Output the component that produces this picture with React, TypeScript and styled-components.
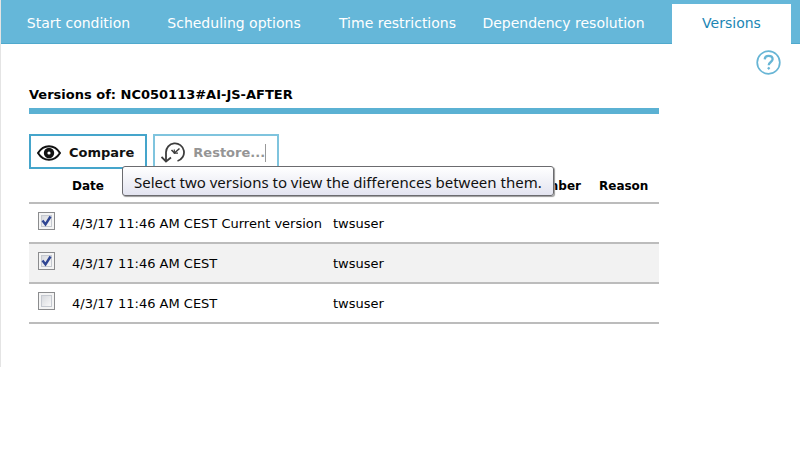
import React, { useState } from "react";
import styled, { createGlobalStyle } from "styled-components";

const GlobalStyle = createGlobalStyle`
  * { box-sizing: border-box; }
  body {
    margin: 0;
    background: #fff;
    color: #000;
    font-family: Verdana, "DejaVu Sans", sans-serif;
    font-size: 13px;
  }
`;

const Panel = styled.div`
  border-left: 1px solid #e4e4e4;
  padding-bottom: 43px;
`;

const TabBar = styled.nav`
  display: grid;
  grid-template-columns: 143fr 168fr 159fr 173fr 22fr 119fr;
  height: 44px;
  padding: 4px 9px 0 6px;
  background: #65b7d9;
  box-shadow: inset 0 -1px 0 #4fa9cd;
`;

const Tab = styled.button<{ $active?: boolean }>`
  display: flex;
  align-items: center;
  justify-content: center;
  padding: 0 0 2px;
  border: 0;
  font: inherit;
  font-size: 14px;
  white-space: nowrap;
  background: ${(p) => (p.$active ? "#fff" : "transparent")};
  color: ${(p) => (p.$active ? "#1c86b4" : "#fff")};
  grid-column: ${(p) => (p.$active ? "6" : "auto")};
`;

const Body = styled.div`
  display: grid;
  grid-template-columns: 1fr 25px;
  column-gap: 97px;
  align-items: start;
  padding: 6px 19px 0 28px;
`;

const Main = styled.main`
  padding-top: 36px;
`;

const HelpButton = styled.button`
  width: 25px;
  height: 25px;
  padding: 0;
  border: 0;
  background: none;
  svg { display: block; }
`;

const Title = styled.h1`
  margin: 0;
  padding-bottom: 4px;
  border-bottom: 6px solid #5bb1d3;
  font-size: 13px;
  line-height: 18px;
`;

const Toolbar = styled.div`
  position: relative;
  display: flex;
  gap: 6px;
  margin-top: 20px;
`;

const ToolButton = styled.button<{ $muted?: boolean }>`
  display: flex;
  align-items: center;
  gap: 8px;
  height: 35px;
  padding: 2px 11px 0 6px;
  border: 2px solid ${(p) => (p.$muted ? "#7fc4de" : "#45a5cb")};
  background: #fff;
  color: ${(p) => (p.$muted ? "#959595" : "#111")};
  font: inherit;
  font-weight: bold;
  white-space: nowrap;
`;

const Caret = styled.span`
  display: inline-block;
  width: 1px;
  height: 18px;
  vertical-align: middle;
  background: #999;
`;

const Tooltip = styled.div`
  position: absolute;
  z-index: 1;
  left: 93px;
  top: 32px;
  height: 30px;
  padding: 0 11px;
  border: 1px solid #6b6b6f;
  border-radius: 3px;
  background: linear-gradient(#fff, #e3e4f0);
  box-shadow: 1px 1px 1px #9a9a9a;
  color: #111;
  font-family: "Noto Sans", "Open Sans", sans-serif;
  font-size: 15px;
  line-height: 30px;
  white-space: nowrap;
`;

const Table = styled.table`
  width: 100%;
  border-collapse: collapse;
  table-layout: fixed;
`;

const Col = styled.col<{ $width: string }>`
  width: ${(p) => p.$width};
`;

const Head = styled.th<{ $end?: boolean }>`
  height: 34px;
  padding: 0 ${(p) => (p.$end ? "18px" : "0")} 0 0;
  border-bottom: 2px solid #bcbcbc;
  text-align: ${(p) => (p.$end ? "right" : "left")};
  font-size: 12px;
  line-height: 14px;
`;

const Row = styled.tr`
  height: 40px;
  border-bottom: 2px solid #bcbcbc;
  &:nth-child(even) { background: #f2f2f2; }
`;

const Cell = styled.td`
  padding: 0;
  white-space: nowrap;
`;

const CheckCell = styled(Cell)`
  padding: 0 0 4px 9px;
`;

const Check = styled.label`
  display: grid;
  width: 17px;
  height: 18px;
  > * { grid-area: 1 / 1; }
  svg { pointer-events: none; }
`;

const CheckInput = styled.input`
  appearance: none;
  width: 17px;
  height: 18px;
  margin: 0;
  border: 1px solid #8b8c8e;
  background: linear-gradient(135deg, #cdd0d6, #f8f8f8 80%);
  box-shadow: inset 0 0 0 2px #f4f4f4, inset 0 0 0 3px #c5c9d0;
`;

const EyeIcon = () => (
  <svg width="24" height="16" viewBox="0 0 24 16" aria-hidden="true">
    <path d="M1 8C4 3.2 7.600 1.200 12 1.200S20 3.200 23 8C20 12.800 16.400 14.800 12 14.800S4 12.800 1 8Z" fill="#fff" stroke="#111" strokeWidth="2" />
    <circle cx="12" cy="8" r="5.200" fill="#111" />
    <circle cx="12" cy="8" r="1.600" fill="#fff" />
  </svg>
);

const RestoreIcon = () => (
  <svg width="24" height="22" viewBox="0 0 24 22" fill="none" stroke="#3d3d3d" strokeWidth="1.800" aria-hidden="true">
    <path d="M5 19.500V10.500A9 9 0 1 1 16.500 19" />
    <path d="M0.500 15L5 19.500L10 15.500" />
    <path d="M10.500 8L13.500 11L18.500 6.500" strokeWidth="1.500" />
    <path d="M13.300 7.500V11.200H17" strokeWidth="1.200" />
  </svg>
);

const HelpIcon = () => (
  <svg width="25" height="25" viewBox="0 0 25 25" fill="none" stroke="#67b5d5" aria-hidden="true">
    <circle cx="12.500" cy="12.500" r="11.300" strokeWidth="1.700" />
    <path d="M8.700 9.300C8.900 7 10.500 5.900 12.600 5.900C14.900 5.900 16.600 7.200 16.600 9.200C16.600 12 12.700 12 12.700 15.300" strokeWidth="2.300" />
    <circle cx="12.700" cy="18.300" r=".9" fill="#67b5d5" />
  </svg>
);

const CheckMark = () => (
  <svg width="17" height="18" viewBox="0 0 17 18" fill="none" aria-hidden="true">
    <path d="M4.500 8.500L7.500 12.500L12.500 4.500" stroke="#2f4593" strokeWidth="2.400" />
  </svg>
);

const tabs = ["Start condition", "Scheduling options", "Time restrictions", "Dependency resolution", "Versions"];

const versions = [
  { date: "4/3/17 11:46 AM CEST Current version", user: "twsuser", picked: true },
  { date: "4/3/17 11:46 AM CEST", user: "twsuser", picked: true },
  { date: "4/3/17 11:46 AM CEST", user: "twsuser", picked: false },
];

export default function App() {
  const [picked, setPicked] = useState(versions.map((v) => v.picked));
  const toggle = (index: number) => setPicked(picked.map((p, i) => (i === index ? !p : p)));

  return (
    <>
      <GlobalStyle />
      <Panel>
        <TabBar>
          {tabs.map((name) => (
            <Tab key={name} type="button" $active={name === "Versions"}>{name}</Tab>
          ))}
        </TabBar>
        <Body>
          <Main>
            <Title>Versions of: NC050113#AI-JS-AFTER</Title>
            <Toolbar>
              <ToolButton type="button" aria-describedby="compare-tip"><EyeIcon />Compare</ToolButton>
              <ToolButton type="button" $muted><RestoreIcon /><span>Restore...<Caret /></span></ToolButton>
              <Tooltip id="compare-tip" role="tooltip">Select two versions to view the differences between them.</Tooltip>
            </Toolbar>
            <Table>
              <colgroup>
                <Col $width="43px" />
                <Col $width="261px" />
                <Col $width="auto" />
                <Col $width="60px" />
              </colgroup>
              <thead>
                <tr>
                  <Head aria-label="Selected" />
                  <Head>Date</Head>
                  <Head $end>Number</Head>
                  <Head>Reason</Head>
                </tr>
              </thead>
              <tbody>
                {versions.map((v, i) => (
                  <Row key={i}>
                    <CheckCell>
                      <Check>
                        <CheckInput type="checkbox" aria-label={`Select version ${i + 1}`} checked={picked[i]} onChange={() => toggle(i)} />
                        {picked[i] && <CheckMark />}
                      </Check>
                    </CheckCell>
                    <Cell>{v.date}</Cell>
                    <Cell>{v.user}</Cell>
                    <Cell />
                  </Row>
                ))}
              </tbody>
            </Table>
          </Main>
          <HelpButton type="button" aria-label="Help"><HelpIcon /></HelpButton>
        </Body>
      </Panel>
    </>
  );
}
